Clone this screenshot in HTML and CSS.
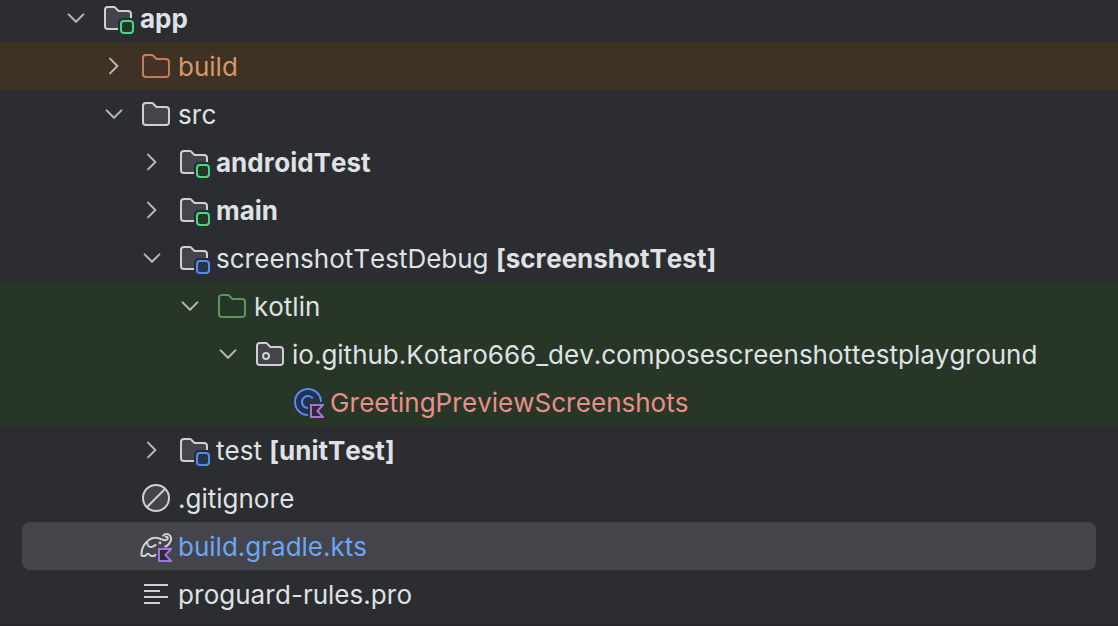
FILE: index.html
```html
<!DOCTYPE html>
<html lang="en">
<head>
<meta charset="utf-8">
<title>Project</title>
<link rel="stylesheet" href="styles.css">
</head>
<body>
<svg class="sprite" aria-hidden="true">
  <symbol id="chevron-down" viewBox="0 0 16 16"><path d="M4.3 6.2 8 9.900l3.700-3.700" fill="none" stroke="#b4b8bf" stroke-linecap="round" stroke-linejoin="round"/></symbol>
  <symbol id="chevron-right" viewBox="0 0 16 16"><path d="M6 4.3 9.7 8 6 11.7" fill="none" stroke="#b4b8bf" stroke-linecap="round" stroke-linejoin="round"/></symbol>
  <symbol id="folder" viewBox="0 0 16 16"><path d="M8.1 4.35l.15.15H13A1.5 1.5 0 0 1 14.5 6v6.1a1.4 1.4 0 0 1-1.4 1.4H2.9a1.4 1.4 0 0 1-1.4-1.4V3.9a1.4 1.4 0 0 1 1.4-1.4h3.13a.5.5 0 0 1 .36.15z"/></symbol>
  <symbol id="module" viewBox="0 0 16 16">
    <path d="M8 14V10.5A2.5 2.5 0 0 1 10.5 8H14.5V6A1.5 1.5 0 0 0 13 4.5H8.25L6.4 2.65a.5.5 0 0 0-.36-.15H2.9a1.4 1.4 0 0 0-1.4 1.4v8.2a1.4 1.4 0 0 0 1.4 1.4H8z" fill="#43454a" stroke="none"/>
    <path d="M8 13.5H2.9a1.4 1.4 0 0 1-1.4-1.4V3.9a1.4 1.4 0 0 1 1.4-1.4h3.13a.5.5 0 0 1 .36.15L8.25 4.5H13A1.5 1.5 0 0 1 14.5 6v2" fill="none" stroke="#ced0d6"/>
    <rect x="9.5" y="9.5" width="6" height="6" rx="1.5"/>
  </symbol>
  <symbol id="package" viewBox="0 0 16 16">
    <use href="#folder"/>
    <circle cx="6" cy="9" r="1.5"/>
  </symbol>
  <symbol id="kotlin-class" viewBox="0 0 16 16">
    <path d="M8 14.5A6.5 6.5 0 1 1 14.5 8H8z" fill="#25324d"/>
    <path d="M8 14.5A6.5 6.5 0 1 1 14.5 8" fill="none" stroke="#548af7"/>
    <path d="M10.4 6.2A3 3 0 1 0 8 11" fill="none" stroke="#548af7"/>
    <path d="M9.5 9.5h6l-2.8 3 2.8 3h-6z" fill="#2f2936" stroke="#a571e6"/>
  </symbol>
  <symbol id="ignored" viewBox="0 0 16 16"><circle cx="8" cy="8" r="6.5" fill="#43454a" stroke="#ced0d6"/><path d="M3.5 12.5l9-9" stroke="#ced0d6"/></symbol>
  <symbol id="gradle" viewBox="0 0 16 16">
    <path d="M7.700 12.400c-.300.400-.600.600-1.100.600H5.600c-.400 0-.600-.300-.800-.600-.400-.700-1.300-.700-1.700 0-.200.400-.400.600-.800.600H1.200c-.300 0-.500-.200-.500-.500 0-2.600.900-4.900 2.800-6.700C5.500 3.700 8.300 3.400 11 4.700c1.500.700 2.900.400 2.900-.6 0-.6-.5-.9-1-.7M3.600 5.800c-.200 2 1.200 3.200 2.700 2.500l1.500-.8M11.600 2.800c.8-1 2.400-1.100 3.300-.1 1 1.200.6 3-.5 4.300-.5.600-1 1.100-1.800 1.300" fill="none" stroke="#ced0d6" stroke-linecap="round" stroke-linejoin="round"/>
    <circle cx="10" cy="6.500" r=".7" fill="#ced0d6"/>
    <path d="M9.500 9.500h6l-2.800 3 2.800 3h-6z" fill="#2f2936" stroke="#a571e6"/>
  </symbol>
  <symbol id="text-file" viewBox="0 0 16 16"><path d="M2 3.500h12M2 6.500h8M2 9.500h12M2 12.500h8" fill="none" stroke="#ced0d6"/></symbol>
</svg>
<main class="panel">
  <ul class="tree">
    <li class="row depth-0"><button class="toggle" aria-label="Collapse app"><svg class="icon"><use href="#chevron-down"/></svg></button><svg class="icon green"><use href="#module"/></svg><span class="name"><b>app</b></span></li>
    <li class="row depth-1 excluded"><button class="toggle" aria-label="Expand build"><svg class="icon"><use href="#chevron-right"/></svg></button><svg class="icon orange"><use href="#folder"/></svg><span class="name">build</span></li>
    <li class="row depth-1"><button class="toggle" aria-label="Collapse src"><svg class="icon"><use href="#chevron-down"/></svg></button><svg class="icon gray"><use href="#folder"/></svg><span class="name">src</span></li>
    <li class="row depth-2"><button class="toggle" aria-label="Expand androidTest"><svg class="icon"><use href="#chevron-right"/></svg></button><svg class="icon green"><use href="#module"/></svg><span class="name"><b>androidTest</b></span></li>
    <li class="row depth-2"><button class="toggle" aria-label="Expand main"><svg class="icon"><use href="#chevron-right"/></svg></button><svg class="icon green"><use href="#module"/></svg><span class="name"><b>main</b></span></li>
    <li class="row depth-2"><button class="toggle" aria-label="Collapse screenshotTestDebug"><svg class="icon"><use href="#chevron-down"/></svg></button><svg class="icon blue"><use href="#module"/></svg><span class="name">screenshotTestDebug <b>[screenshotTest]</b></span></li>
    <li class="row depth-3 test"><button class="toggle" aria-label="Collapse kotlin"><svg class="icon"><use href="#chevron-down"/></svg></button><svg class="icon test-root"><use href="#folder"/></svg><span class="name">kotlin</span></li>
    <li class="row depth-4 test"><button class="toggle" aria-label="Collapse package"><svg class="icon"><use href="#chevron-down"/></svg></button><svg class="icon gray"><use href="#package"/></svg><span class="name">io.github.Kotaro666_dev.composescreenshottestplayground</span></li>
    <li class="row depth-5 leaf test untracked"><svg class="icon"><use href="#kotlin-class"/></svg><span class="name">GreetingPreviewScreenshots</span></li>
    <li class="row depth-2"><button class="toggle" aria-label="Expand test"><svg class="icon"><use href="#chevron-right"/></svg></button><svg class="icon blue"><use href="#module"/></svg><span class="name">test <b>[unitTest]</b></span></li>
    <li class="row depth-1 leaf"><svg class="icon"><use href="#ignored"/></svg><span class="name">.gitignore</span></li>
    <li class="row depth-1 leaf selected"><svg class="icon"><use href="#gradle"/></svg><span class="name">build.gradle.kts</span></li>
    <li class="row depth-1 leaf"><svg class="icon"><use href="#text-file"/></svg><span class="name">proguard-rules.pro</span></li>
  </ul>
</main>
</body>
</html>
```
FILE: styles.css
```css
* {
  box-sizing: border-box;
}

body {
  margin: 0;
  overflow: hidden;
  background: #2b2d30;
  color: #dfe1e5;
  font: 26px/32px Inter, "Liberation Sans", sans-serif;
  font-kerning: none;
}

.sprite {
  position: absolute;
  width: 0;
  height: 0;
}

.panel {
  padding-bottom: 6px;
  border-bottom: 2px solid #27282b;
}

.tree {
  margin: -6px 0 0;
  padding: 0;
  list-style: none;
}

.row {
  --indent: 60px;
  display: flex;
  align-items: center;
  height: 48px;
  padding-left: calc(var(--indent) + var(--depth) * 38px);
  white-space: nowrap;
}

.depth-0 { --depth: 0; }
.depth-1 { --depth: 1; }
.depth-2 { --depth: 2; }
.depth-3 { --depth: 3; }
.depth-4 { --depth: 4; }
.depth-5 { --depth: 5; }

.leaf {
  --indent: 102px;
}

.toggle {
  display: flex;
  margin: 0 10px 0 0;
  padding: 0;
  border: 0;
  background: none;
}

.icon {
  flex: none;
  width: 32px;
  height: 32px;
}

.name {
  margin-left: 6px;
  padding-top: 2px;
}

.name b {
  font-weight: 700;
}

.gray { fill: #43454a; stroke: #ced0d6; }
.green { fill: #253627; stroke: #3ddc84; }
.blue { fill: #25324d; stroke: #548af7; }
.orange { fill: #45322b; stroke: #c77d55; }
.test-root { fill: #253627; stroke: #57965c; }

.excluded {
  background: #3d3223;
  color: #d5976a;
}

.test {
  background: #283628;
}

.untracked {
  color: #e88f89;
}

.selected {
  --indent: 80px;
  margin: 0 22px;
  border-radius: 8px;
  background: #43454a;
  color: #6ba5f8;
}
```
